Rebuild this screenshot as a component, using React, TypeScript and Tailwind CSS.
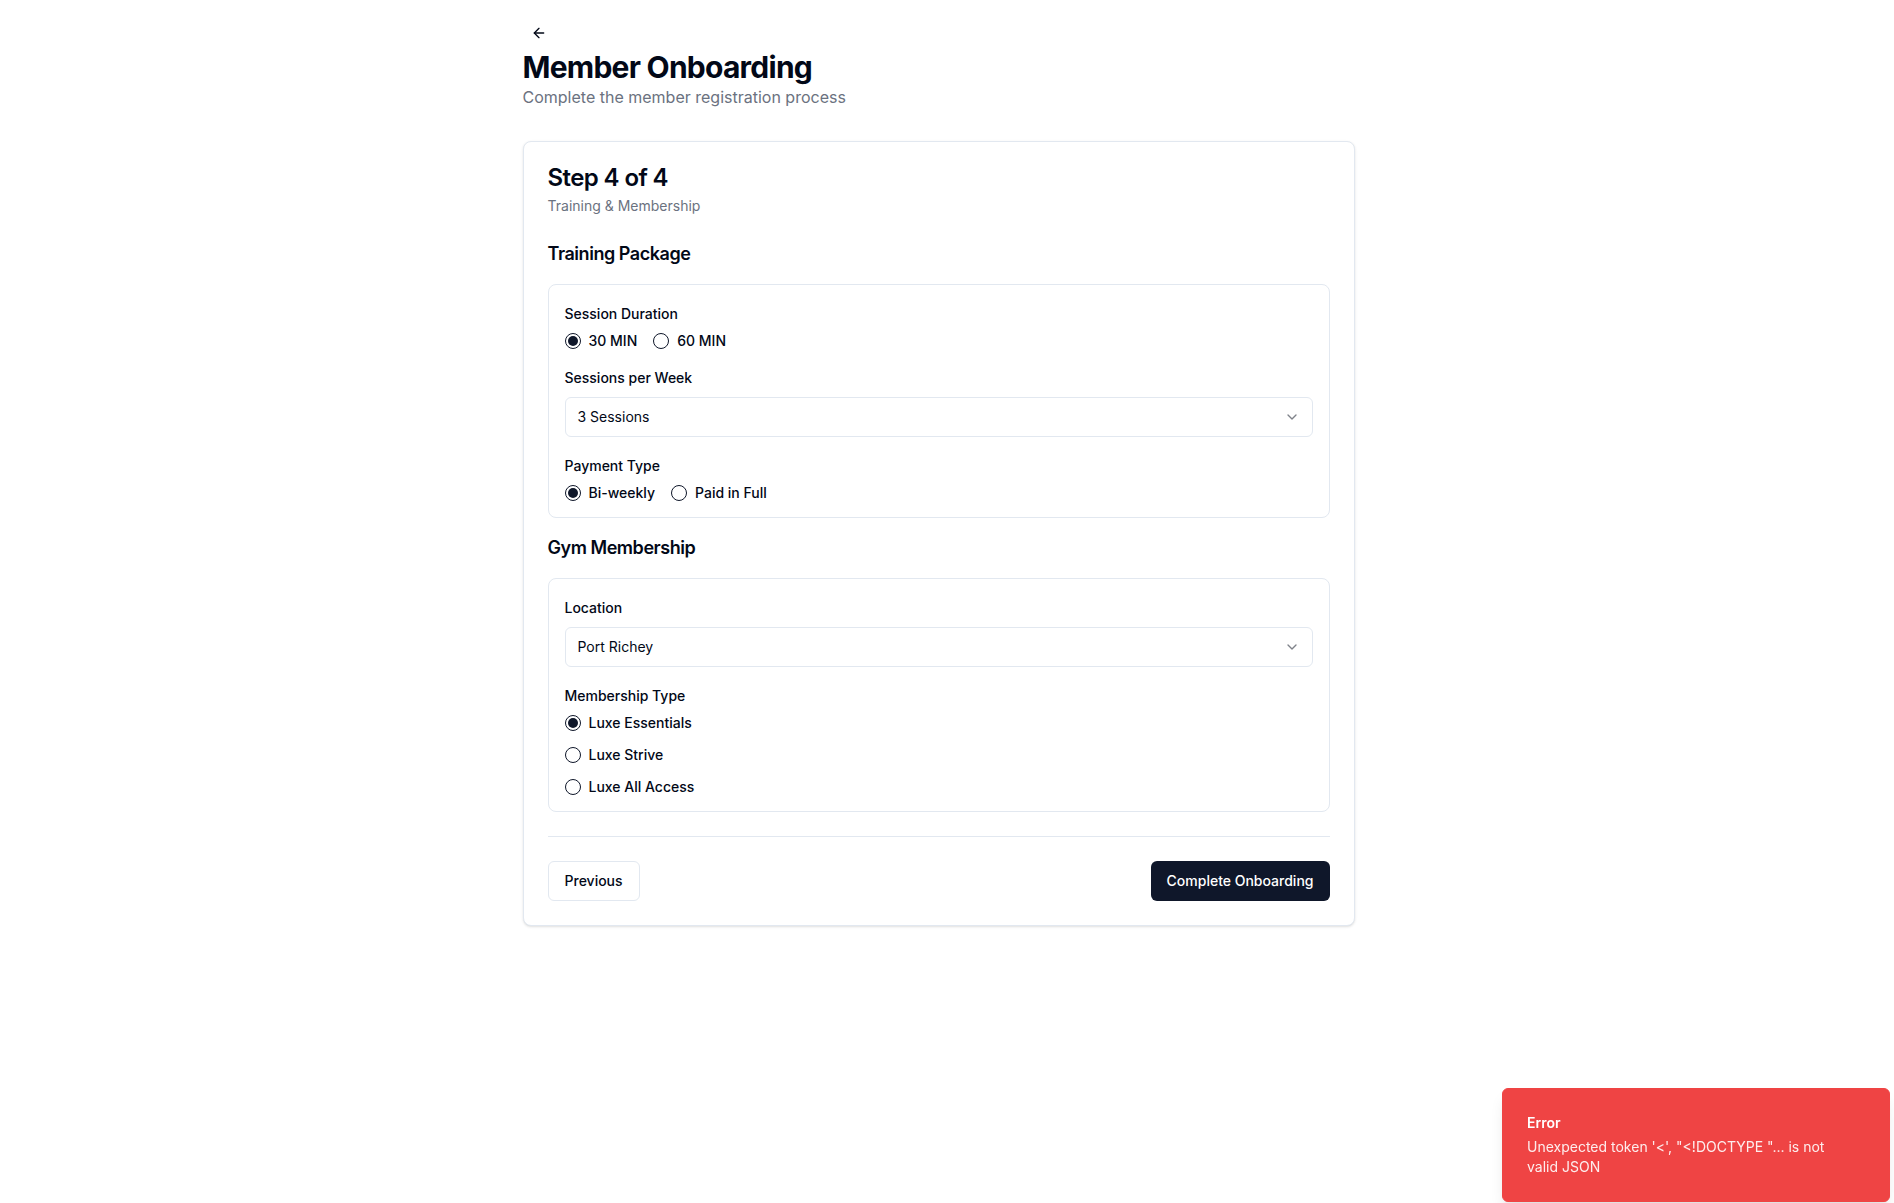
import React, { useState } from 'react';
import { ArrowLeft, ChevronDown } from 'lucide-react';

interface RadioOption {
  value: string;
  label: string;
}

interface RadioGroupProps {
  options: RadioOption[];
  value: string;
  onChange: (value: string) => void;
  vertical?: boolean;
}

const RadioGroup: React.FC<RadioGroupProps> = ({ options, value, onChange, vertical }) => (
  <div className={vertical ? 'flex flex-col gap-4' : 'flex items-center gap-4'}>
    {options.map((opt) => {
      const checked = opt.value === value;
      return (
        <label key={opt.value} className="flex cursor-pointer items-center gap-2">
          <button
            type="button"
            onClick={() => onChange(opt.value)}
            className="flex h-4 w-4 items-center justify-center rounded-full border border-[#0f172a]"
            aria-checked={checked}
            role="radio"
          >
            {checked && <span className="h-2.5 w-2.5 rounded-full bg-[#0f172a]" />}
          </button>
          <span className="text-sm font-medium leading-none">{opt.label}</span>
        </label>
      );
    })}
  </div>
);

// label block stays 24px tall, text sits a bit low
const FieldLabel: React.FC<{ children: React.ReactNode }> = ({ children }) => (
  <div className="pt-[3px] pb-px text-sm font-medium leading-5">{children}</div>
);

const SelectBox: React.FC<{ value: string }> = ({ value }) => (
  <button
    type="button"
    className="flex h-10 w-full items-center justify-between rounded-md border border-[#e2e8f0] bg-white px-3 text-sm"
  >
    <span>{value}</span>
    <ChevronDown className="h-4 w-4 opacity-50" />
  </button>
);

export default function App() {
  const [duration, setDuration] = useState('30');
  const [payment, setPayment] = useState('biweekly');
  const [membership, setMembership] = useState('essentials');

  return (
    <div className="min-h-screen bg-white pr-[17px] font-['Inter',sans-serif] text-[#020817]">
      <div className="mx-auto max-w-4xl px-8 pt-[17px] pb-8">
        <button type="button" className="flex h-8 w-8 items-center justify-center rounded-md">
          <ArrowLeft className="h-4 w-4" />
        </button>
        <h1 className="text-3xl font-bold tracking-tight">Member Onboarding</h1>
        <p className="text-base text-[#6b7280]">Complete the member registration process</p>

        <div className="mt-8 rounded-lg border border-[#e2e8f0] bg-white shadow-sm">
          <div className="flex flex-col gap-1.5 p-6">
            <h2 className="text-2xl font-semibold leading-none tracking-tight">Step 4 of 4</h2>
            <p className="text-sm text-[#6b7280]">Training &amp; Membership</p>
          </div>

          <div className="px-6 pb-6">
            <div className="flex flex-col gap-4">
              <h3 className="text-lg font-semibold tracking-tight">Training Package</h3>
              <div className="flex flex-col gap-4 rounded-lg border border-[#e2e8f0] p-4">
                <div className="flex flex-col gap-2">
                  <FieldLabel>Session Duration</FieldLabel>
                  <RadioGroup
                    value={duration}
                    onChange={setDuration}
                    options={[
                      { value: '30', label: '30 MIN' },
                      { value: '60', label: '60 MIN' },
                    ]}
                  />
                </div>
                <div className="flex flex-col gap-2">
                  <FieldLabel>Sessions per Week</FieldLabel>
                  <SelectBox value="3 Sessions" />
                </div>
                <div className="flex flex-col gap-2">
                  <FieldLabel>Payment Type</FieldLabel>
                  <RadioGroup
                    value={payment}
                    onChange={setPayment}
                    options={[
                      { value: 'biweekly', label: 'Bi-weekly' },
                      { value: 'full', label: 'Paid in Full' },
                    ]}
                  />
                </div>
              </div>

              <h3 className="text-lg font-semibold tracking-tight">Gym Membership</h3>
              <div className="flex flex-col gap-4 rounded-lg border border-[#e2e8f0] p-4">
                <div className="flex flex-col gap-2">
                  <FieldLabel>Location</FieldLabel>
                  <SelectBox value="Port Richey" />
                </div>
                <div className="flex flex-col gap-2">
                  <FieldLabel>Membership Type</FieldLabel>
                  <RadioGroup
                    vertical
                    value={membership}
                    onChange={setMembership}
                    options={[
                      { value: 'essentials', label: 'Luxe Essentials' },
                      { value: 'strive', label: 'Luxe Strive' },
                      { value: 'all', label: 'Luxe All Access' },
                    ]}
                  />
                </div>
              </div>
            </div>

            <div className="mt-6 flex items-center justify-between border-t border-[#e2e8f0] pt-6">
              <button
                type="button"
                className="h-10 rounded-md border border-[#e2e8f0] bg-white px-4 text-sm font-medium"
              >
                Previous
              </button>
              <button
                type="button"
                className="h-10 rounded-md bg-[#0f172a] px-4 text-sm font-medium text-white"
              >
                Complete Onboarding
              </button>
            </div>
          </div>
        </div>
      </div>

      {/* toast */}
      <div className="fixed right-[4px] bottom-px w-[388px] rounded-md border border-[#ef4444] bg-[#ef4444] p-6 pr-8 text-white shadow-lg">
        <div className="grid gap-1">
          <div className="text-sm font-semibold">Error</div>
          <div className="text-sm opacity-90">Unexpected token '&lt;', "&lt;!DOCTYPE "... is not valid JSON</div>
        </div>
      </div>
    </div>
  );
}
